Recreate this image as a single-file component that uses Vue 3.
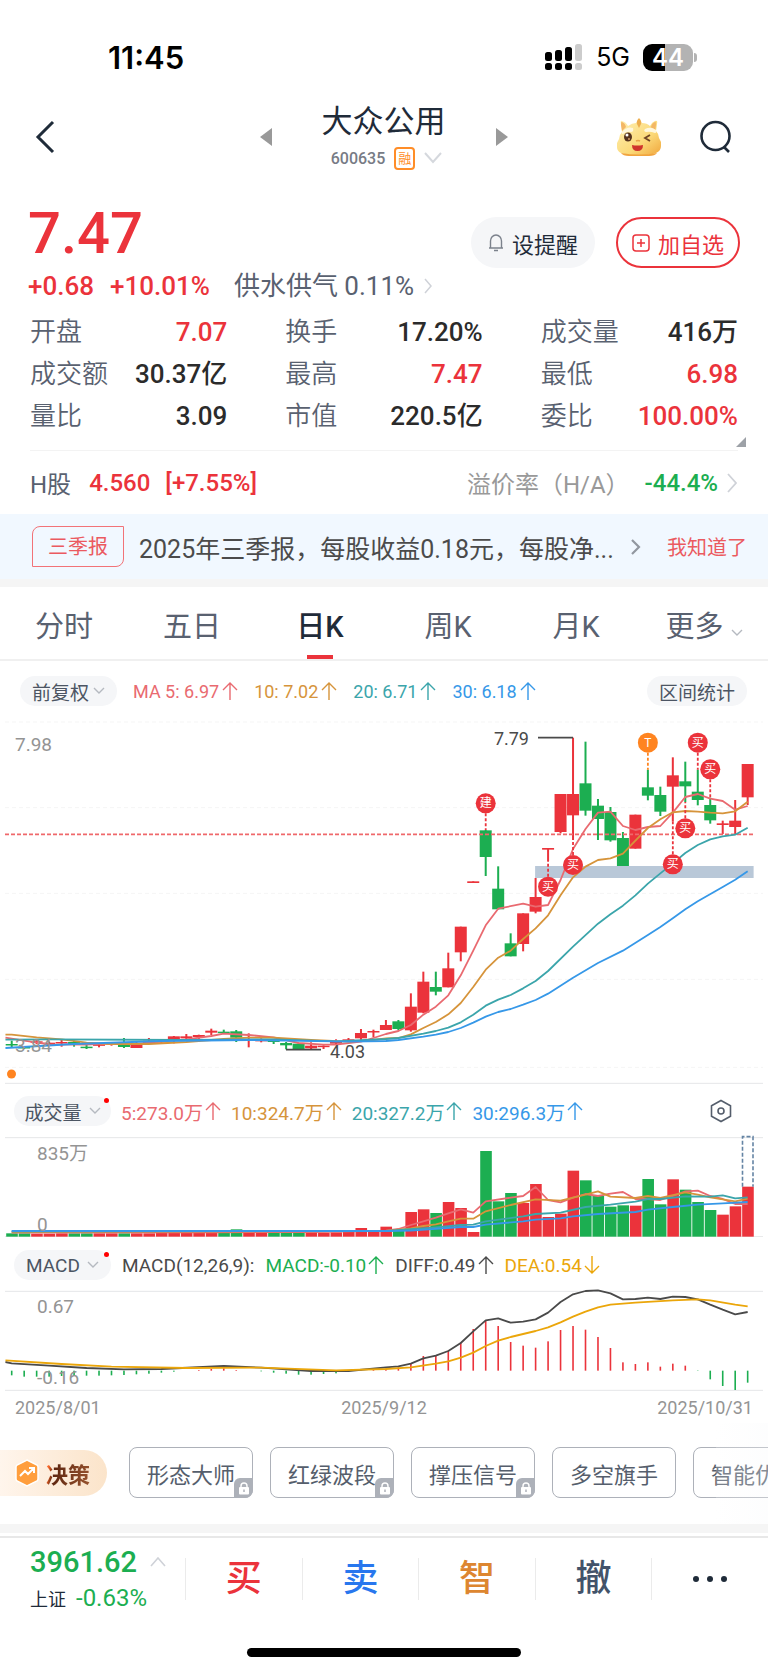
<template>
  <div class="page">
    <div class="status-bar">
      <span class="time">11:45</span>
      <div class="status-right">
        <svg width="38" height="28" viewBox="0 0 38 28">
          <g v-for="(bar, i) in signalBars" :key="i" :fill="bar.color">
            <rect :x="i * 10" :y="bar.y" width="7" :height="18 - bar.y" rx="2.5" />
            <rect :x="i * 10" y="20" width="7" height="7" rx="2.5" />
          </g>
        </svg>
        <span class="network">5G</span>
        <div class="battery">44</div>
      </div>
    </div>

    <header class="nav">
      <button class="icon-btn back" aria-label="返回">
        <svg width="20" height="34" viewBox="0 0 20 34" fill="none" stroke="#1f2b39" stroke-width="3">
          <polyline points="18 2 3 17 18 32" />
        </svg>
      </button>
      <div class="nav-center">
        <button class="icon-btn" aria-label="上一只">
          <svg width="12" height="18" viewBox="0 0 12 18"><path d="M12 0v18L0 9z" fill="#999" /></svg>
        </button>
        <div class="nav-title">
          <h1>大众公用</h1>
          <div class="nav-code">
            <span>600635</span>
            <span class="margin-tag">融</span>
            <svg width="18" height="12" viewBox="0 0 18 12" fill="none" stroke="#d5d8dd" stroke-width="2"><polyline points="1 1 9 10 17 1" /></svg>
          </div>
        </div>
        <button class="icon-btn" aria-label="下一只">
          <svg width="12" height="18" viewBox="0 0 12 18"><path d="M0 0v18l12-9z" fill="#999" /></svg>
        </button>
      </div>
      <div class="nav-actions">
        <button class="icon-btn" aria-label="助手">
          <svg width="44" height="40" viewBox="0 0 44 40">
            <defs>
              <linearGradient id="face" x1="0" y1="0" x2="1" y2="1">
                <stop offset="0" stop-color="#fff0b4" />
                <stop offset="0.6" stop-color="#fbd978" />
                <stop offset="1" stop-color="#f0a63c" />
              </linearGradient>
            </defs>
            <path d="M4 8q-1-5 1-4 4 1 6 5 4-3 8-3l3-3 3 3q5 0 8 3 2-4 5-5 3-1 2 3l-1 7q3 3 3 7l2 4v4q0 5-5 7l-3 1q-14 3-28 0l-4-1q-4-2-4-6v-4l2-4q0-4 3-7z" fill="url(#face)" />
            <path d="M4 8q0-4 1-3 3 1 4 5l-4 4zM39 8q0-4-1-3-3 1-4 5l4 4z" fill="#f3b765" />
            <path d="M22 1q3 3 2 6l-2 4-2-4q-1-3 2-6z" fill="#edae4e" />
            <path d="M5 15q5-6 11-4 1 4-2 4-4-1-8 2-2 0-1-2zM28 12q6-3 11 1 1 3-1 3-5-2-9-1-3-1-1-3z" fill="#fff7dc" />
            <ellipse cx="11" cy="20" rx="4" ry="4.500" fill="#56331d" />
            <circle cx="10" cy="18" r="1.5" fill="#fff" />
            <circle cx="12" cy="22" r="1" fill="#d59b62" />
            <path d="M33 18l-5 3 5 3" fill="none" stroke="#704523" stroke-width="1.8" />
            <path d="M19 24q2-1 4 0" fill="none" stroke="#e8a349" stroke-width="1.6" />
            <path d="M15 28q5 1 11 0 0 6-5.500 6T15 28z" fill="#cf342c" />
            <path d="M4 36q18 3 36 0-2 3-8 3H12q-6 0-8-3z" fill="#f1a43e" />
          </svg>
        </button>
        <button class="icon-btn" aria-label="搜索">
          <svg width="32" height="34" viewBox="0 0 32 34" fill="none" stroke="#1f2b39" stroke-width="2.6">
            <circle cx="15.500" cy="16" r="14" />
            <path d="M24 27l5 5" />
          </svg>
        </button>
      </div>
    </header>

    <section class="quote">
      <div class="quote-head">
        <div>
          <div class="price">7.47</div>
          <div class="change">
            <span>+0.68</span>
            <span>+10.01%</span>
            <a href="#" class="sector">供水供气 0.11%
              <svg width="9" height="16" viewBox="0 0 9 16" fill="none" stroke="#cfd2d8" stroke-width="1.5"><polyline points="1 1 7 8 1 15" /></svg>
            </a>
          </div>
        </div>
        <div class="quote-actions">
          <button class="pill-btn">
            <svg width="16" height="19" viewBox="0 0 16 19" fill="none" stroke="#7c828c" stroke-width="1.4">
              <path d="M1 15h14M2.500 15V8a5.500 6 0 0 1 11 0v7M6 17.500h4" />
            </svg>
            设提醒
          </button>
          <button class="pill-btn add">
            <svg width="18" height="18" viewBox="0 0 18 18" fill="none" stroke="#eb333b" stroke-width="1.5">
              <rect x="1" y="1" width="16" height="16" rx="3" />
              <path d="M9 5v8M5 9h8" />
            </svg>
            加自选
          </button>
        </div>
      </div>

      <dl class="stats">
        <div v-for="s in stats" :key="s.label" class="stat">
          <dt>{{ s.label }}</dt>
          <dd :class="{ up: s.up }">{{ s.value }}</dd>
        </div>
      </dl>
      <div class="expand"><svg width="10" height="10" viewBox="0 0 10 10"><path d="M10 0v10H0z" fill="#9da1a7" /></svg></div>

      <div class="h-share">
        <span class="h-name">H股</span>
        <span class="up">4.560</span>
        <span class="up">[+7.55%]</span>
        <span class="premium">溢价率（H/A）</span>
        <span class="down">-44.4%</span>
        <svg width="11" height="20" viewBox="0 0 11 20" fill="none" stroke="#cfd2d8" stroke-width="1.8"><polyline points="1 1 9 10 1 19" /></svg>
      </div>
    </section>

    <section class="notice">
      <span class="notice-tag">三季报</span>
      <span class="notice-text">2025年三季报，每股收益0.18元，每股净...</span>
      <svg width="10" height="16" viewBox="0 0 10 16" fill="none" stroke="#9297a0" stroke-width="2.2"><polyline points="1 1 8 8 1 15" /></svg>
      <button class="notice-ok">我知道了</button>
    </section>

    <nav class="tabs">
      <button v-for="tab in tabs" :key="tab" class="tab" :class="{ active: tab === activeTab }" @click="activeTab = tab">
        {{ tab }}
        <svg v-if="tab === '更多'" width="12" height="8" viewBox="0 0 12 8" fill="none" stroke="#b5b9c0" stroke-width="1.4"><polyline points="1 1 6 6 11 1" /></svg>
      </button>
    </nav>

    <div class="indicator-row ma-row">
      <button class="chip">前复权<svg width="12" height="8" viewBox="0 0 12 8" fill="none" stroke="#b5b9c0" stroke-width="1.4"><polyline points="1 1 6 6 11 1" /></svg></button>
      <span v-for="m in maLabels" :key="m.text" class="reading" :class="m.cls">{{ m.text }}<svg class="arrow" viewBox="0 0 16 18"><path d="M8 18V1M1 8l7-7 7 7" /></svg></span>
      <button class="chip stat-chip">区间统计</button>
    </div>

    <svg class="chart" viewBox="0 0 768 375">
      <line v-for="g in [66, 323, 580, 838, 1102]" :key="g" x1="5" x2="763" :y1="priceY(g)" :y2="priceY(g)" class="grid" />
      <rect :x="colX(42) - 0.500" :y="priceY(498)" width="218.500" height="12" fill="#b9c8d8" />
      <g v-for="(c, i) in candles" :key="i" :class="c[0] === 'r' ? 'rise' : 'fall'">
        <rect :x="colX(i) - 1" :y="priceY(c[1])" width="2" :height="(c[4] - c[1]) / 3" />
        <rect :x="colX(i) - 6" :y="priceY(c[2])" width="12" :height="Math.max((c[3] - c[2]) / 3, 1.5)" />
      </g>
      <line x1="5" x2="753" :y1="priceY(403)" :y2="priceY(403)" class="last-price" />
      <polyline v-for="l in priceLines" :key="l.cls" :points="toPoints(l.data, priceY)" class="line" :class="l.cls" />
      <text x="15" :y="priceY(152)" class="axis">7.98</text>
      <text x="15" :y="priceY(1056)" class="axis">3.84</text>
      <line x1="538" x2="573" :y1="priceY(113)" :y2="priceY(113)" class="leader" />
      <text x="529" :y="priceY(135)" text-anchor="end" class="peak">7.79</text>
      <line x1="286" x2="321" :y1="priceY(1049)" :y2="priceY(1049)" class="leader" />
      <text x="330" :y="priceY(1074)" class="peak">4.03</text>
      <g v-for="(m, i) in marks" :key="'m' + i" :class="m.text === 'T' ? 'mark-t' : 'mark'">
        <line :x1="colX(m.i)" :x2="colX(m.i)" :y1="priceY(m.y)" :y2="priceY(m.to)" />
        <circle :cx="colX(m.i)" :cy="priceY(m.y)" r="10" />
        <text :x="colX(m.i)" :y="priceY(m.y) + 4" text-anchor="middle">{{ m.text }}</text>
      </g>
      <circle cx="11.500" :cy="priceY(1122)" r="4.500" fill="#ff8420" />
      <line x1="5" x2="763" :y1="priceY(1150)" :y2="priceY(1150)" class="frame" />
    </svg>

    <div class="indicator-row vol-row">
      <button class="chip sub">成交量<svg width="12" height="8" viewBox="0 0 12 8" fill="none" stroke="#b5b9c0" stroke-width="1.4"><polyline points="1 1 6 6 11 1" /></svg></button>
      <span v-for="m in volLabels" :key="m.text" class="reading" :class="m.cls">{{ m.text }}<svg class="arrow" viewBox="0 0 16 18"><path d="M8 18V1M1 8l7-7 7 7" /></svg></span>
      <button class="icon-btn settings" aria-label="指标设置">
        <svg width="22" height="24" viewBox="0 0 22 24" fill="none" stroke="#555e6c" stroke-width="1.6">
          <path d="M11 1.500l9.500 5.200v10.600L11 22.500l-9.500-5.200V6.700z" />
          <circle cx="11" cy="12" r="3" />
        </svg>
      </button>
    </div>

    <svg class="chart" viewBox="0 0 768 107">
      <line x1="5" x2="763" :y1="volY(173)" :y2="volY(173)" class="frame" />
      <line x1="5" x2="763" :y1="volY(470)" :y2="volY(470)" class="frame" />
      <rect v-for="(v, i) in volumes" :key="i" :x="colX(i) - 5.500" :y="volY(v)" width="11.600" :height="(470 - v) / 3" :class="candles[i][0] === 'r' ? 'rise' : 'fall'" />
      <path :d="`M742.500 ${volY(320)}V${volY(170)}H753V${volY(320)}`" class="forecast" />
      <polyline v-for="l in volLines" :key="l.cls" :points="toPoints(l.data, volY)" class="line" :class="l.cls" />
      <text x="37" :y="volY(239)" class="axis">835万</text>
      <text x="37" :y="volY(453)" class="axis">0</text>
    </svg>

    <div class="indicator-row macd-row">
      <button class="chip sub">MACD<svg width="12" height="8" viewBox="0 0 12 8" fill="none" stroke="#b5b9c0" stroke-width="1.4"><polyline points="1 1 6 6 11 1" /></svg></button>
      <span class="reading dark">MACD(12,26,9):</span>
      <span class="reading down">MACD:-0.10<svg class="arrow" viewBox="0 0 16 18"><path d="M8 18V1M1 8l7-7 7 7" /></svg></span>
      <span class="reading dark">DIFF:0.49<svg class="arrow" viewBox="0 0 16 18"><path d="M8 18V1M1 8l7-7 7 7" /></svg></span>
      <span class="reading dea">DEA:0.54<svg class="arrow" viewBox="0 0 16 18"><path d="M8 0v17M1 10l7 7 7-7" /></svg></span>
    </div>

    <svg class="chart" viewBox="0 0 768 106">
      <line x1="5" x2="763" :y1="macdY(634)" :y2="macdY(634)" class="frame" />
      <line x1="5" x2="763" :y1="macdY(931)" :y2="macdY(931)" class="frame" />
      <rect v-for="(v, i) in macdBars" :key="i" :x="colX(i) - 0.800" :y="macdY(Math.min(v, 872))" width="1.600" :height="Math.abs(v - 872) / 3" :class="v < 872 ? 'rise' : 'fall'" />
      <polyline :points="toPoints(diffLine, macdY)" class="line dark" />
      <polyline :points="toPoints(deaLine, macdY)" class="line dea" />
      <text x="37" :y="macdY(700)" class="axis">0.67</text>
      <text x="37" :y="macdY(913)" class="axis">-0.16</text>
    </svg>

    <div class="dates">
      <span>2025/8/01</span>
      <span>2025/9/12</span>
      <span>2025/10/31</span>
    </div>

    <section class="tools">
      <button class="decision">
        <svg width="24" height="28" viewBox="0 0 24 28">
          <path d="M12 1l10 5q1 1 1 2v12q0 1-1 2l-10 5-10-5q-1-1-1-2V8q0-1 1-2z" fill="#ff9e3d" stroke="#fff" stroke-width="1.5" />
          <path d="M5 17l5-5 3 3 5-5M14 9h5v5" fill="none" stroke="#fff" stroke-width="2" />
        </svg>
        <span>决策</span>
      </button>
      <button v-for="t in tools" :key="t.name" class="tool">
        {{ t.name }}
        <span v-if="t.locked" class="lock">
          <svg width="12" height="13" viewBox="0 0 12 13"><path d="M3 6V4a3 3 0 0 1 6 0v2" fill="none" stroke="#fff" stroke-width="1.4" /><rect x="1" y="5" width="10" height="7.500" rx="1" fill="#fff" /><path d="M6 7.500v2.500" stroke="#a9adb5" stroke-width="1.400" /></svg>
        </span>
      </button>
    </section>

    <footer class="trade-bar">
      <div class="index">
        <div class="index-value">3961.62<svg width="16" height="10" viewBox="0 0 16 10" fill="none" stroke="#cfd2d8" stroke-width="1.6"><polyline points="1 9 8 1 15 9" /></svg></div>
        <div class="index-change"><span>上证</span>-0.63%</div>
      </div>
      <button class="trade buy">买</button>
      <button class="trade sell">卖</button>
      <button class="trade smart">智</button>
      <button class="trade cancel">撤</button>
      <button class="trade" aria-label="更多操作">
        <svg width="36" height="8" viewBox="0 0 36 8" fill="#1f2b39"><circle cx="4" cy="4" r="3" /><circle cx="18" cy="4" r="3" /><circle cx="32" cy="4" r="3" /></svg>
      </button>
    </footer>
    <div class="home-bar"></div>
  </div>
</template>

<script setup>
import { ref } from 'vue';

const signalBars = [
  { y: 9, color: '#000' },
  { y: 7, color: '#000' },
  { y: 4, color: '#000' },
  { y: 1, color: '#ccc' }
];

const stats = [
  { label: '开盘', value: '7.07', up: true },
  { label: '换手', value: '17.20%' },
  { label: '成交量', value: '416万' },
  { label: '成交额', value: '30.37亿' },
  { label: '最高', value: '7.47', up: true },
  { label: '最低', value: '6.98', up: true },
  { label: '量比', value: '3.09' },
  { label: '市值', value: '220.5亿' },
  { label: '委比', value: '100.00%', up: true }
];

const tabs = ['分时', '五日', '日K', '周K', '月K', '更多'];
const activeTab = ref('日K');

const maLabels = [
  { text: 'MA 5: 6.97', cls: 'ma5' },
  { text: '10: 7.02', cls: 'ma10' },
  { text: '20: 6.71', cls: 'ma20' },
  { text: '30: 6.18', cls: 'ma30' }
];

const volLabels = [
  { text: '5:273.0万', cls: 'ma5' },
  { text: '10:324.7万', cls: 'ma10' },
  { text: '20:327.2万', cls: 'ma20' },
  { text: '30:296.3万', cls: 'ma30' }
];

const tools = [
  { name: '形态大师', locked: true },
  { name: '红绿波段', locked: true },
  { name: '撑压信号', locked: true },
  { name: '多空旗手', locked: false },
  { name: '智能优选', locked: false }
];

// 图表数据以 1/3 像素为单位
const colX = i => 11.7 + i * 12.474;
const priceY = v => v / 3 - 10;
const volY = v => v / 3 - 50;
const macdY = v => v / 3 - 206;
const toPoints = (data, scale) => data.map(([i, v]) => `${colX(i)},${scale(v)}`).join(' ');

// [涨跌, 最高, 实体上沿, 实体下沿, 最低]
const candles = [
  ['g', 1022, 1032, 1036, 1041], ['g', 1038, 1041, 1044, 1047], ['r', 1020, 1024, 1027, 1032],
  ['r', 1025, 1028, 1032, 1034], ['r', 1019, 1026, 1030, 1040], ['g', 1022, 1026, 1034, 1040],
  ['g', 1034, 1040, 1044, 1047], ['r', 1031, 1033, 1036, 1042], ['r', 1027, 1029, 1033, 1037],
  ['g', 1014, 1028, 1041, 1044], ['r', 1025, 1033, 1044, 1044], ['r', 1014, 1022, 1029, 1031],
  ['r', 1020, 1023, 1026, 1028], ['r', 1008, 1009, 1018, 1030], ['r', 1002, 1009, 1015, 1017],
  ['r', 1004, 1005, 1011, 1018], ['r', 986, 992, 998, 1005], ['g', 989, 995, 999, 1002],
  ['g', 990, 994, 1013, 1026], ['r', 1000, 1017, 1022, 1042], ['r', 1015, 1017, 1024, 1027],
  ['g', 1018, 1020, 1026, 1032], ['g', 1026, 1029, 1036, 1048], ['g', 1030, 1031, 1048, 1048],
  ['r', 1027, 1037, 1045, 1048], ['r', 1036, 1037, 1039, 1047], ['r', 1018, 1024, 1031, 1033],
  ['r', 1014, 1018, 1021, 1026], ['r', 987, 999, 1015, 1021], ['r', 989, 993, 996, 1012],
  ['r', 960, 975, 990, 990], ['g', 960, 964, 987, 990], ['r', 880, 920, 991, 995],
  ['r', 815, 845, 938, 940], ['g', 815, 861, 875, 886], ['r', 758, 805, 862, 862],
  ['r', 680, 680, 757, 784], ['r', 544, 544, 549, 549], ['g', 390, 391, 471, 528],
  ['g', 499, 566, 628, 628], ['g', 700, 730, 769, 769], ['r', 640, 640, 732, 754],
  ['r', 534, 591, 635, 640], ['r', 444, 444, 449, 483], ['r', 282, 282, 396, 400],
  ['r', 113, 282, 346, 420], ['g', 125, 250, 332, 347], ['g', 297, 317, 357, 420],
  ['g', 321, 336, 421, 425], ['g', 396, 414, 498, 498], ['r', 344, 344, 446, 446],
  ['g', 209, 262, 287, 301], ['g', 260, 285, 335, 348], ['r', 172, 226, 260, 365],
  ['g', 185, 244, 259, 306], ['g', 209, 275, 300, 316], ['g', 293, 315, 361, 371],
  ['r', 362, 370, 375, 402], ['r', 300, 362, 381, 403], ['r', 192, 192, 292, 315]
];

const priceLines = [
  {
    cls: 'ma5',
    data: [[-0.5, 1013], [1, 1022], [3, 1033], [6, 1034], [8, 1030], [10, 1032], [12, 1024], [14, 1018], [16, 1008], [17, 1001], [19, 1005], [21, 1012], [23, 1029], [25, 1034], [26, 1034], [28, 1025], [29, 1014], [30, 1002], [31, 993], [32, 975], [33, 944], [34, 920], [35, 886], [36, 826], [37, 752], [38, 676], [39, 626], [41, 611], [42, 620], [43, 615], [44, 540], [45, 447], [46, 387], [47, 338], [48, 335], [49, 378], [50, 390], [51, 381], [52, 378], [53, 338], [54, 291], [55, 282], [56, 296], [57, 303], [58, 329], [59, 318]]
  },
  {
    cls: 'ma10',
    data: [[-0.5, 1004], [0, 1004], [2, 1012], [4, 1018], [6, 1028], [8, 1032], [11, 1032], [14, 1026], [17, 1017], [19, 1013], [21, 1013], [24, 1020], [27, 1025], [29, 1020], [30, 1015], [31, 1014], [32, 1003], [33, 984], [34, 966], [35, 943], [36, 909], [37, 861], [38, 809], [39, 773], [40, 752], [41, 717], [42, 685], [43, 646], [44, 586], [45, 532], [46, 500], [47, 480], [48, 475], [49, 461], [50, 422], [51, 384], [52, 358], [53, 337], [54, 333], [55, 335], [56, 338], [57, 340], [58, 334], [59, 305]]
  },
  {
    cls: 'ma20',
    data: [[-0.5, 1019], [3, 1018], [14, 1020], [21, 1018], [26, 1024], [30, 1017], [31, 1014], [33, 1001], [34, 993], [35, 983], [36, 967], [37, 944], [38, 917], [39, 899], [40, 885], [41, 865], [42, 843], [43, 813], [45, 740], [47, 671], [48, 643], [49, 617], [50, 586], [51, 551], [52, 520], [53, 490], [54, 459], [55, 435], [56, 418], [57, 409], [58, 404], [59, 383]]
  },
  {
    cls: 'ma30',
    data: [[-0.5, 1044], [5, 1032], [12, 1023], [19, 1020], [22, 1022], [27, 1025], [30, 1023], [31, 1020], [33, 1010], [34, 1004], [35, 996], [36, 984], [37, 968], [38, 950], [39, 936], [40, 927], [41, 914], [42, 900], [43, 881], [44, 857], [45, 833], [47, 789], [49, 752], [51, 705], [52, 681], [53, 655], [54, 628], [55, 604], [57, 561], [58, 539], [59, 514]]
  }
];

const marks = [
  { i: 38, y: 310, to: 390, text: '建' },
  { i: 43, y: 560, to: 483, text: '买' },
  { i: 45, y: 495, to: 420, text: '买' },
  { i: 51, y: 128, to: 209, text: 'T' },
  { i: 53, y: 493, to: 365, text: '买' },
  { i: 54, y: 385, to: 306, text: '买' },
  { i: 55, y: 128, to: 209, text: '买' },
  { i: 56, y: 208, to: 293, text: '买' }
];

const volumes = [
  460, 460, 461, 461, 460, 460, 460, 460, 460, 460, 460, 460, 459, 459, 458, 457, 451, 456, 448, 456,
  456, 457, 457, 457, 457, 458, 457, 455, 444, 453, 440, 452, 396, 388, 399, 366, 384, 456, 213, 364,
  339, 369, 312, 411, 401, 272, 301, 348, 380, 376, 377, 297, 373, 298, 329, 366, 390, 404, 379, 320
];

const volLines = [
  {
    cls: 'ma5',
    data: [[0, 458], [16, 457], [24, 456], [30, 452], [31, 447], [32, 435], [33, 424], [34, 413], [35, 400], [36, 388], [37, 398], [38, 364], [40, 353], [41, 348], [42, 321], [43, 360], [44, 367], [45, 353], [46, 342], [47, 348], [48, 341], [49, 336], [50, 357], [51, 357], [52, 360], [53, 348], [54, 334], [55, 332], [56, 348], [57, 357], [58, 372], [59, 372]]
  },
  {
    cls: 'ma10',
    data: [[0, 456], [30, 453], [32, 445], [33, 438], [34, 433], [35, 424], [36, 416], [37, 416], [38, 394], [40, 375], [42, 358], [44, 362], [46, 344], [47, 334], [48, 350], [50, 354], [51, 348], [52, 354], [54, 337], [55, 344], [56, 352], [58, 364], [59, 356]]
  },
  {
    cls: 'ma20',
    data: [[0, 454], [30, 453], [34, 442], [36, 435], [37, 434], [38, 424], [41, 409], [42, 402], [44, 398], [46, 381], [48, 374], [50, 365], [51, 357], [52, 357], [54, 349], [56, 350], [57, 346], [58, 355], [59, 352]]
  },
  {
    cls: 'ma30',
    data: [[0, 453], [30, 453], [32, 452], [36, 441], [37, 441], [38, 434], [41, 424], [42, 419], [44, 415], [45, 409], [47, 402], [50, 396], [51, 389], [53, 381], [55, 374], [57, 370], [59, 366]]
  }
];

const macdBars = [
  886, 890, 890, 890, 888, 888, 887, 887, 886, 885, 883, 881, 878, 875, 872, 870, 867, 865, 870, 872,
  874, 878, 881, 884, 884, 882, 880, 876, 871, 869, 866, 862, 850, 828, 826, 812, 787, 747, 720, 738,
  786, 797, 803, 784, 750, 738, 749, 771, 804, 847, 852, 847, 860, 851, 857, 873, 898, 918, 930, 908
];

const diffLine = [[-0.5, 846], [0, 850], [3, 857], [6, 864], [9, 868], [12, 867], [17, 858], [20, 863], [24, 873], [27, 873], [30, 862], [31, 859], [32, 851], [33, 835], [34, 827], [35, 813], [36, 789], [37, 754], [38, 721], [39, 715], [40, 728], [41, 725], [42, 718], [43, 698], [44, 666], [45, 643], [46, 633], [47, 631], [48, 640], [49, 658], [50, 657], [51, 653], [52, 657], [53, 650], [54, 651], [55, 658], [56, 674], [57, 689], [58, 703], [59, 696]];
const deaLine = [[-0.5, 841], [4, 852], [8, 860], [14, 864], [20, 863], [26, 871], [30, 867], [32, 862], [34, 851], [35, 844], [36, 833], [37, 818], [38, 798], [39, 782], [40, 771], [41, 762], [42, 753], [43, 742], [44, 727], [45, 710], [46, 695], [47, 682], [48, 674], [50, 668], [53, 661], [55, 658], [56, 661], [58, 674], [59, 679]];
</script>

<style>
body {
  background: #fff;
}
</style>

<style scoped>
.page {
  overflow: hidden;
  background: #fff;
  color: #2b2b2b;
  font-family: Roboto, "Noto Sans CJK SC", sans-serif;
  font-size: 26px;
}

button {
  border: none;
  background: none;
  padding: 0;
  font: inherit;
  color: inherit;
  cursor: pointer;
}

svg {
  flex-shrink: 0;
}

.up {
  color: #eb333b;
}

.down {
  color: #1cae51;
}

.status-bar {
  display: flex;
  justify-content: space-between;
  align-items: center;
  height: 28px;
  padding: 43px 75px 30px 108px;
  font-family: Inter, sans-serif;
  color: #000;
}

.time {
  font-size: 31px;
  font-weight: 600;
}

.status-right {
  display: flex;
  align-items: center;
  gap: 13px;
}

.network {
  font-size: 25px;
}

.battery {
  position: relative;
  width: 50px;
  height: 27px;
  border-radius: 9px;
  background: linear-gradient(90deg, #000 44%, #b3b3b3 44%);
  color: #fff;
  font-size: 24px;
  font-weight: 600;
  line-height: 27px;
  text-align: center;
}

.battery::after {
  content: "";
  position: absolute;
  top: 9px;
  right: -4px;
  width: 3px;
  height: 9px;
  border-radius: 0 3px 3px 0;
  background: #b3b3b3;
}

.nav {
  display: grid;
  grid-template-columns: 1fr auto 1fr;
  align-items: center;
  padding: 0 36px 0 35px;
}

.icon-btn {
  display: flex;
}

.nav-center {
  display: flex;
  align-items: center;
  justify-content: space-between;
  width: 248px;
}

.nav-title {
  text-align: center;
}

.nav-title h1 {
  margin: 0;
  color: #1f2b39;
  font-size: 31px;
  font-weight: 400;
  line-height: 42px;
}

.nav-code {
  display: flex;
  align-items: center;
  justify-content: center;
  gap: 9px;
  height: 30px;
  padding-left: 6px;
  color: #777b85;
  font-size: 16px;
  font-weight: 500;
}

.margin-tag {
  border: 2px solid #ff8d28;
  border-radius: 4px;
  padding: 0 2px;
  color: #ff8d28;
  font-size: 13px;
  font-weight: 400;
  line-height: 19px;
}

.nav-actions {
  display: flex;
  align-items: center;
  justify-content: flex-end;
  gap: 39px;
}

.quote {
  padding: 30px 30px 0;
}

.quote-head {
  display: flex;
  justify-content: space-between;
  margin: 0 -2px;
}

.price {
  color: #eb333b;
  font-size: 58px;
  font-weight: 500;
  line-height: 60px;
}

.change {
  display: flex;
  gap: 16px;
  color: #eb333b;
  font-weight: 500;
  line-height: 46px;
  white-space: nowrap;
}

.sector {
  display: flex;
  align-items: center;
  gap: 10px;
  margin-left: 8px;
  color: #596170;
  font-weight: 400;
  text-decoration: none;
}

.quote-actions {
  display: flex;
  gap: 21px;
  margin-top: 14px;
}

.pill-btn {
  display: flex;
  align-items: center;
  justify-content: center;
  gap: 8px;
  width: 124px;
  height: 51px;
  border-radius: 26px;
  background: #f5f6f8;
  color: #1f2b39;
  font-size: 22px;
}

.pill-btn.add {
  border: 2px solid #eb333b;
  background: #fff;
  color: #eb333b;
}

.stats {
  display: grid;
  grid-template-columns: repeat(3, 1fr);
  column-gap: 58px;
  margin: 2px 0 0;
}

.stat {
  display: flex;
  justify-content: space-between;
  line-height: 42px;
  white-space: nowrap;
}

.stat dt {
  color: #596170;
  font-weight: 350;
}

.stat dd {
  margin: 0;
  font-weight: 500;
}

.stat dd.up {
  color: #eb333b;
}

.expand {
  display: flex;
  justify-content: flex-end;
  height: 13px;
  margin-right: -8px;
}

.h-share {
  display: flex;
  align-items: center;
  gap: 15px;
  height: 63px;
  border-top: 1px solid #f3f3f3;
  font-size: 24px;
  font-weight: 500;
}

.h-name {
  margin-right: 3px;
  color: #596170;
  font-weight: 400;
}

.premium {
  margin-left: auto;
  color: #999;
  font-weight: 400;
}

.h-share .down {
  margin-right: -6px;
}

.notice {
  display: flex;
  align-items: center;
  justify-content: space-between;
  height: 65px;
  padding: 0 21px 0 32px;
  border-bottom: 8px solid #f5f5f5;
  background: #f1f8ff;
}

.notice-tag {
  flex-shrink: 0;
  border: 1px solid #f27378;
  border-radius: 8px 0;
  padding: 1px 15px 0;
  color: #eb5a60;
  font-size: 20px;
  line-height: 38px;
}

.notice-text {
  flex: 1;
  margin-left: 15px;
  color: #4b4b4b;
  font-size: 25px;
  white-space: nowrap;
}

.notice-ok {
  margin-left: 26px;
  color: #eb5a60;
  font-size: 20px;
}

.tabs {
  display: grid;
  grid-template-columns: repeat(6, 1fr);
  border-bottom: 2px solid #f0f0f0;
}

.tab {
  position: relative;
  height: 72px;
  padding-top: 2px;
  color: #596170;
  font-size: 29px;
}

.tab.active {
  color: #1f2b39;
  font-weight: 500;
}

.tab.active::after {
  content: "";
  position: absolute;
  bottom: 0;
  left: calc(50% - 13px);
  width: 26px;
  height: 4px;
  background: #eb333b;
}

.indicator-row {
  display: flex;
  align-items: center;
  height: 30px;
  white-space: nowrap;
}

.ma-row {
  gap: 16px;
  padding: 15px 21px 4px 20px;
}

.vol-row {
  gap: 10px;
  padding: 11px 36px 4px 14px;
}

.macd-row {
  gap: 11px;
  padding: 13px 36px 6px 14px;
}

.chip {
  display: flex;
  align-items: center;
  justify-content: center;
  gap: 4px;
  height: 30px;
  border-radius: 15px;
  padding: 0 12px;
  background: #f5f6f8;
  color: #4c5563;
  font-size: 19px;
}

.stat-chip {
  margin-left: auto;
}

.chip.sub {
  position: relative;
  gap: 7px;
  width: 97px;
  padding: 0;
}

.chip.sub::after {
  content: "";
  position: absolute;
  top: 2px;
  right: 2px;
  width: 5px;
  height: 5px;
  border-radius: 50%;
  background: #f00;
}

.reading {
  display: flex;
  align-items: center;
  gap: 2px;
  font-size: 19px;
}

.ma-row .reading {
  gap: 3px;
  font-size: 18px;
}

.arrow {
  width: 16px;
  height: 18px;
  fill: none;
  stroke: currentColor;
  stroke-width: 1.4;
}

.settings {
  margin-left: auto;
}

.ma5 {
  color: #e96a70;
}

.ma10 {
  color: #d6943b;
}

.ma20 {
  color: #3ba5ab;
}

.ma30 {
  color: #3698e8;
}

.dark {
  color: #4a4a4a;
}

.dea {
  color: #eba60a;
}

.chart {
  display: block;
  width: 100%;
}

.grid {
  stroke: #f5f5f5;
  stroke-dasharray: 4 3;
}

.frame {
  stroke: #e5e6e8;
}

.last-price {
  stroke: #ef686b;
  stroke-width: 1.8;
  stroke-dasharray: 4 2;
}

.line {
  fill: none;
  stroke: currentColor;
  stroke-width: 1.8;
  stroke-linejoin: round;
}

.rise {
  fill: #eb333b;
}

.fall {
  fill: #1cae51;
}

.leader {
  stroke: #4a4a4a;
  stroke-width: 1.6;
}

.axis {
  fill: #949494;
  font-size: 19px;
}

.peak {
  fill: #4a4a4a;
  font-size: 18px;
}

.mark line {
  stroke: #eb333b;
  stroke-width: 1.8;
  stroke-dasharray: 3 2;
}

.mark circle {
  fill: #eb333b;
}

.mark text,
.mark-t text {
  fill: #fff;
  font-size: 12px;
}

.mark-t line {
  stroke: #ff8420;
  stroke-width: 1.8;
  stroke-dasharray: 3 2;
}

.mark-t circle {
  fill: #ff8420;
}

.forecast {
  fill: none;
  stroke: #6484a4;
  stroke-width: 1.6;
  stroke-dasharray: 4 2;
}

.dates {
  display: grid;
  grid-template-columns: 1fr auto 1fr;
  padding: 0 15px;
  color: #949494;
  font-size: 18px;
  line-height: 31px;
}

.dates span:last-child {
  text-align: right;
}

.tools {
  position: relative;
  display: flex;
  align-items: center;
  gap: 17px;
  overflow: hidden;
  padding: 24px 0 26px;
  border-bottom: 9px solid #f5f5f5;
}

.tools::after {
  content: "";
  position: absolute;
  top: 0;
  right: 0;
  bottom: 0;
  width: 52px;
  background: linear-gradient(90deg, rgba(255, 255, 255, 0.2), rgba(248, 249, 251, 0.3));
  pointer-events: none;
}

.decision {
  display: flex;
  flex-shrink: 0;
  align-items: center;
  gap: 7px;
  width: 107px;
  height: 46px;
  margin-right: 5px;
  padding-left: 15px;
  border-radius: 0 23px 23px 0;
  background: linear-gradient(90deg, #fff5ec, #fbe4ca);
  font-size: 22px;
  font-weight: 700;
}

.decision span {
  background: linear-gradient(100deg, #ff6a2a 8%, #5e2610 20%, #9a552f);
  background-clip: text;
  color: transparent;
}

.tool {
  position: relative;
  flex-shrink: 0;
  width: 124px;
  height: 51px;
  border: 1px solid #adb1b9;
  border-radius: 8px;
  color: #555e6c;
  font-size: 22px;
}

.lock {
  position: absolute;
  right: -1px;
  bottom: -1px;
  display: flex;
  align-items: center;
  justify-content: center;
  width: 19px;
  height: 20px;
  border-radius: 6px 0 8px;
  background: #adb1b9;
}

.trade-bar {
  display: grid;
  grid-template-columns: 185px repeat(5, 1fr);
  align-items: center;
  margin-top: 3px;
  padding-top: 2px;
  border-top: 2px solid #e8e8e8;
}

.index {
  padding: 4px 0 0 30px;
  color: #1cae51;
  font-weight: 500;
}

.index-value {
  display: flex;
  align-items: center;
  gap: 13px;
  font-size: 29px;
  line-height: 36px;
}

.index-change {
  font-size: 24px;
  font-weight: 400;
  line-height: 36px;
}

.index-change span {
  margin-right: 10px;
  color: #1f2b39;
  font-size: 18px;
}

.trade {
  display: flex;
  align-items: center;
  justify-content: center;
  height: 42px;
  border-left: 1px solid #ebebeb;
  font-size: 36px;
  font-weight: 500;
  line-height: 42px;
}

.buy {
  color: #eb333b;
}

.sell {
  color: #2877ee;
}

.smart {
  color: #dd8630;
}

.cancel {
  color: #43536a;
}

.home-bar {
  width: 274px;
  height: 9px;
  margin: 30px auto 14px;
  border-radius: 5px;
  background: #000;
}
</style>
